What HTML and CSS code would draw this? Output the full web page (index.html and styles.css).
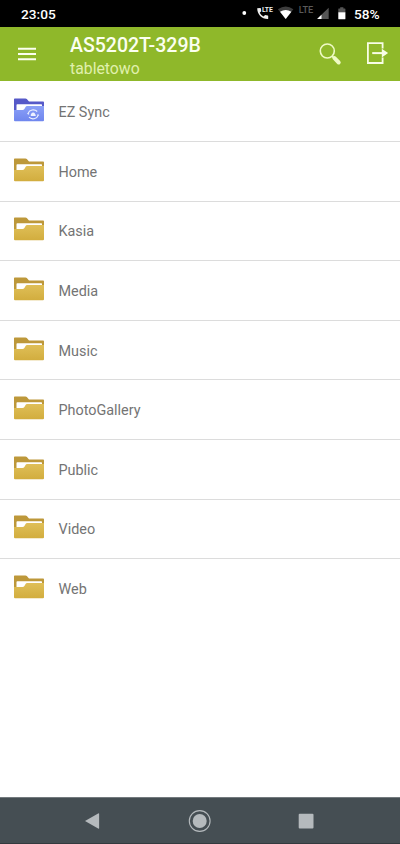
FILE: index.html
```
<!DOCTYPE html>
<html lang="en">
<head>
<meta charset="utf-8">
<title>AS5202T-329B</title>
<link rel="stylesheet" href="styles.css">
</head>
<body>
<svg class="defs" width="0" height="0" aria-hidden="true">
  <defs>
    <linearGradient id="gold" x1="0" y1="0" x2="0" y2="1"><stop offset="0" stop-color="#dfbf58"/><stop offset="1" stop-color="#d2ad3e"/></linearGradient>
    <linearGradient id="blue" x1="0" y1="0" x2="0" y2="1"><stop offset="0" stop-color="#8ba0f7"/><stop offset="1" stop-color="#6f86ee"/></linearGradient>
    <symbol id="folder" viewBox="0 0 30 24">
      <path class="back" d="M0 1.2Q0 .5.7.5H11.5Q12.3.5 12.8 1.1L15 3.6H29.2Q30 3.6 30 4.4V12H0Z"/>
      <path fill="#fff" d="M2.5 6.9Q2.5 6.2 3.2 6.2H27.3Q28 6.2 28 6.9V12H2.5Z"/>
      <path class="front" d="M0 12H8.5Q9.7 12 10.4 11L11.4 9.2Q12 8.1 13.2 8.1H30V22.3Q30 23.3 29 23.3H1Q0 23.3 0 22.3Z"/>
    </symbol>
  </defs>
</svg>
<div class="status">
  <span class="clock">23:05</span>
  <svg class="indicators" width="106" height="20" viewBox="240 3 106 20">
    <circle cx="244.3" cy="13" r="1.9" fill="#fff"/>
    <path fill="#eee" d="M257.2 8.2 260.3 8Q260.8 8 260.9 8.5L261.3 11.2 259.7 12.8Q261 15.3 263.5 16.5L265.1 14.9 267.7 15.4Q268.2 15.5 268.2 16V18.5Q268.2 19.1 267.6 19.1C261.7 18.9 257.2 14.3 257.2 8.2Z"/>
    <text x="261.9" y="11.9" font-size="6.8" font-weight="700" fill="#eee" textLength="11" lengthAdjust="spacingAndGlyphs">LTE</text>
    <path fill="#3d3d3d" d="M277.9 9.2Q285.7 3.8 293.4 9.2L285.7 19Z"/>
    <path fill="#fff" d="M280 11.8Q285.7 8.4 291.4 11.8L285.7 19Z"/>
    <text x="298.7" y="12.9" font-size="8.4" font-weight="500" fill="#5a5a5a" textLength="14.6" lengthAdjust="spacingAndGlyphs">LTE</text>
    <path fill="#555" d="M317.2 19V18.7L328.7 7.8V19Z"/>
    <path fill="#fff" d="M317.2 19 321.5 14.7V19Z"/>
    <path fill="#555" d="M338.3 12.4V9Q338.3 8.5 338.8 8.5H340.2V7.3H343.4V8.5H344.8Q345.4 8.5 345.4 9V12.4Z"/>
    <path fill="#fff" d="M338.3 12.2H345.4V18.8Q345.4 19.3 344.9 19.3H338.8Q338.3 19.3 338.3 18.8Z"/>
  </svg>
  <span class="percent">58%</span>
</div>
<header class="appbar">
  <svg class="menu" width="20" height="16" viewBox="0 0 20 16"><path stroke="#fbfff0" stroke-width="2" d="M1 2.7H19M1 8H19M1 13.3H19"/></svg>
  <div class="titles"><h1>AS5202T-329B</h1><p>tabletowo</p></div>
  <svg class="search" width="24" height="24" viewBox="318 42 24 24"><circle cx="327.3" cy="51" r="7" fill="none" stroke="#effac5" stroke-width="1.6"/><path d="m332 56 2.3 2.3" stroke="#effac5" stroke-width="1.8"/><path d="m334.5 58.2 4.2 4.3" stroke="#effac5" stroke-width="4" stroke-linecap="round"/></svg>
  <svg class="exit" width="24" height="24" viewBox="366 42 24 24"><path d="M382.6 48.6V43.1H367.9V63H382.6V57.4" fill="none" stroke="#f8fde6" stroke-width="1.8"/><path d="M372.2 53.1H383" stroke="#f8fde6" stroke-width="2"/><path d="m381.8 48.8 6.3 4.3-6.3 4.3Z" fill="#f8fde6"/></svg>
</header>
<main>
  <ul class="list">
    <li><svg class="folder sync" width="30" height="24" viewBox="0 0 30 24"><use href="#folder"/><g fill="none" stroke="#eef2ff" stroke-width="1.1"><path d="M14.1 15.4A5.3 4.8 0 0 1 23.2 13.5M24.1 17.3A5.3 4.8 0 0 1 15 19.2"/></g><path fill="#eef2ff" d="m13 15 2.3.2-1 1.7ZM25.2 17.7 23 17.5 24 15.8ZM17.2 18.1Q15.9 17.4 17 16.3 17.5 14.3 19.3 14.5 20.9 14.5 21.2 16.2 22.7 17 21.3 18.1Z"/></svg><span>EZ Sync</span></li>
    <li><svg class="folder" width="30" height="24"><use href="#folder"/></svg><span>Home</span></li>
    <li><svg class="folder" width="30" height="24"><use href="#folder"/></svg><span>Kasia</span></li>
    <li><svg class="folder" width="30" height="24"><use href="#folder"/></svg><span>Media</span></li>
    <li><svg class="folder" width="30" height="24"><use href="#folder"/></svg><span>Music</span></li>
    <li><svg class="folder" width="30" height="24"><use href="#folder"/></svg><span>PhotoGallery</span></li>
    <li><svg class="folder" width="30" height="24"><use href="#folder"/></svg><span>Public</span></li>
    <li><svg class="folder" width="30" height="24"><use href="#folder"/></svg><span>Video</span></li>
    <li><svg class="folder" width="30" height="24"><use href="#folder"/></svg><span>Web</span></li>
  </ul>
</main>
<nav class="navbar">
  <svg width="24" height="24" viewBox="0 0 24 24"><path fill="#b5babd" d="M5 12 18.6 4.3Q19.1 4.2 19.1 4.7V19.3Q19.1 19.9 18.6 19.7Z"/></svg>
  <svg width="24" height="24" viewBox="0 0 24 24"><circle cx="12.7" cy="12" r="10.4" fill="none" stroke="#b5babd" stroke-width="1.1"/><circle cx="12.7" cy="12" r="7" fill="#b5babd"/></svg>
  <svg width="24" height="24" viewBox="0 0 24 24"><rect x="4.7" y="4.7" width="14.8" height="14.8" rx="1" fill="#b5babd"/></svg>
</nav>
</body>
</html>
```
FILE: styles.css
```
* { box-sizing: border-box; }
body {
  margin: 0;
  height: 844px;
  display: flex;
  flex-direction: column;
  overflow: hidden;
  background: #fff;
  font-family: Roboto, sans-serif;
}
svg { display: block; flex: none; }
.defs { position: absolute; }
.status {
  height: 27px;
  flex: none;
  display: flex;
  align-items: center;
  padding: 0 0 0 21px;
  background: #000;
  color: #fff;
  font-size: 13.7px;
  font-weight: 500;
}
.clock { flex: none; width: 219px; padding-top: 1px; }
.indicators { margin-bottom: 1px; }
.percent { margin-left: 8px; padding-top: 1px; font-size: 13.7px; }
.appbar {
  height: 54px;
  flex: none;
  display: flex;
  align-items: center;
  padding: 0 10px 0 17px;
  background: #8fb82a;
}
.titles { margin-left: 33px; width: 248px; padding-top: 6px; }
.titles h1 {
  margin: 0;
  font-size: 19.5px;
  line-height: 24px;
  font-weight: 500;
  color: #fbfff0;
}
.titles p {
  margin: 0;
  font-size: 15.8px;
  line-height: 22px;
  color: #e0f0ad;
}
.exit { margin-left: 24px; }
main { flex: 1; padding-top: 1.4px; }
.list { margin: 0; padding: 0; list-style: none; }
.list li {
  height: 59.6px;
  display: flex;
  align-items: center;
  padding-left: 14px;
  border-bottom: 1px solid #dcdcdc;
  color: #747474;
  font-size: 14.4px;
}
.list li:last-child { border-bottom: 0; }
.list span { margin-left: 14.5px; padding-top: 2px; }
.folder { margin-bottom: 3px; }
.back { fill: var(--back, #bd983a); }
.front { fill: var(--front, url(#gold)); }
.sync { --back: #5659c8; --front: url(#blue); }
.navbar {
  height: 47px;
  flex: none;
  display: flex;
  align-items: center;
  justify-content: space-between;
  padding: 0 82px 0 80px;
  background: #454e53;
  border-top: 1px solid #737a7e;
  border-bottom: 1px solid #333a3e;
}
```
